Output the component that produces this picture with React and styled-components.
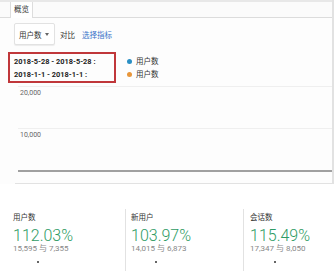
import React from "react";
import styled, { createGlobalStyle } from "styled-components";

const Global = createGlobalStyle`
  html, body { margin: 0; padding: 0; background: #fff; }
  body { font-family: Roboto, "Noto Sans CJK SC", sans-serif; color: #333; }
`;

const Page = styled.div`
  width: 336px;
  height: 271px;
  overflow: hidden;
  background: #fff;
`;

const Top = styled.div`
  width: 332px;
  border-right: 2px solid #e2e2e2;
`;

const TabBar = styled.div`
  display: flex;
  height: 15px;
  padding-left: 10px;
  border-top: 2px solid #e8e8e8;
  border-bottom: 1px solid #dcdcdc;
  background: #fbfbfb;
`;

const Tab = styled.div`
  padding: 0 3px;
  font-size: 7.5px;
  line-height: 15px;
  background: #fff;
  border-left: 1px solid #ddd;
  border-right: 1px solid #ddd;
  color: #333;
  height: 16px;
`;

const Panel = styled.div`
  background: #fdfdfd;
  padding-bottom: 11px;
  &::after {
    content: "";
    display: block;
    margin: 11px 0 -11px 15px;
    border-bottom: 1px solid #e2e2e2;
  }
`;

const Controls = styled.div`
  display: flex;
  align-items: center;
  padding: 5px 0 0 14px;
  font-size: 7.5px;
`;

const Select = styled.div`
  display: flex;
  align-items: center;
  justify-content: space-between;
  width: 41px;
  height: 22px;
  box-sizing: border-box;
  padding: 0 5px 0 4px;
  border: 1px solid #e2e2e2;
  border-radius: 2px;
  box-shadow: 0 1px 1px rgba(0, 0, 0, 0.07);
  background: #fff;
  margin-right: 5px;
`;

const Caret = styled.span`
  width: 0;
  height: 0;
  border-left: 2.5px solid transparent;
  border-right: 2.5px solid transparent;
  border-top: 3px solid #666;
`;

const Link = styled.span`
  color: #3a73c9;
  margin-left: 7px;
`;

const LegendRow = styled.div`
  display: flex;
  align-items: flex-start;
  padding: 7px 0 0 8px;
  gap: 11px;
`;

const DateBox = styled.div`
  border: 2px solid #c0373a;
  padding: 1.5px 4px;
  width: 96px;
  display: flex;
  flex-direction: column;
  gap: 2px;
`;

const DateLine = styled.div`
  font-size: 7.4px;
  font-weight: 700;
  line-height: 11px;
  color: #222;
  white-space: pre;
`;

const Legend = styled.div`
  display: flex;
  flex-direction: column;
  gap: 2px;
  padding-top: 4px;
`;

const LegendItem = styled.div`
  display: flex;
  align-items: center;
  gap: 4px;
  font-size: 7.5px;
  line-height: 11px;
  &::before {
    content: "";
    width: 5px;
    height: 5px;
    border-radius: 50%;
    background: ${(p) => p.$color};
  }
`;

const Chart = styled.div`
  margin: 3px 0 0 18px;
  display: flex;
  flex-direction: column;
`;

const GridRow = styled.div`
  height: 42px;
  border-top: 1px solid #efefef;
  font-size: 7px;
  line-height: 8px;
  color: #666;
  padding: 2px 0 0 2px;
  box-sizing: border-box;
`;

const Axis = styled.div`
  height: 0;
  border-top: 2px solid #a0a0a0;
`;

const Metrics = styled.div`
  display: grid;
  grid-template-columns: 125px 118px 1fr;
  margin-top: 25px;
`;

const Metric = styled.div`
  padding: 4px 0 0 ${(p) => p.$pad}px;
  border-left: ${(p) => (p.$first ? "none" : "1px solid #e2e2e2")};
  height: 62px;
`;

const MetricLabel = styled.div`
  font-size: 7.5px;
  line-height: 10px;
  color: #333;
`;

const MetricValue = styled.div`
  font-size: 16px;
  line-height: 16px;
  font-weight: 300;
  color: #2e9b64;
  margin-top: 5px;
`;

const MetricSub = styled.div`
  font-size: 8px;
  line-height: 9px;
  color: #888;
`;

const Dot = styled.div`
  width: 2px;
  height: 2px;
  border-radius: 50%;
  background: #333;
  margin: 8px 0 0 24px;
`;

const metrics = [
  { label: "用户数", value: "112.03%", sub: "15,595 与 7,355", pad: 13 },
  { label: "新用户", value: "103.97%", sub: "14,015 与 6,873", pad: 5 },
  { label: "会话数", value: "115.49%", sub: "17,347 与 8,050", pad: 6 },
];

export default function App() {
  return (
    <Page>
      <Global />
      <Top>
        <TabBar>
          <Tab>概览</Tab>
        </TabBar>
        <Panel>
          <Controls>
            <Select>
              用户数 <Caret />
            </Select>
            <span>对比</span>
            <Link>选择指标</Link>
          </Controls>
          <LegendRow>
            <DateBox>
              <DateLine>2018-5-28 - 2018-5-28 :</DateLine>
              <DateLine>2018-1-1 - 2018-1-1 :</DateLine>
            </DateBox>
            <Legend>
              <LegendItem $color="#2a8fc4">用户数</LegendItem>
              <LegendItem $color="#e8963a">用户数</LegendItem>
            </Legend>
          </LegendRow>
          <Chart>
            <GridRow>20,000</GridRow>
            <GridRow>10,000</GridRow>
            <Axis />
          </Chart>
        </Panel>
      </Top>
      <Metrics>
        {metrics.map((m, i) => (
          <Metric key={m.label} $first={i === 0} $pad={m.pad}>
            <MetricLabel>{m.label}</MetricLabel>
            <MetricValue>{m.value}</MetricValue>
            <MetricSub>{m.sub}</MetricSub>
            <Dot />
          </Metric>
        ))}
      </Metrics>
    </Page>
  );
}
